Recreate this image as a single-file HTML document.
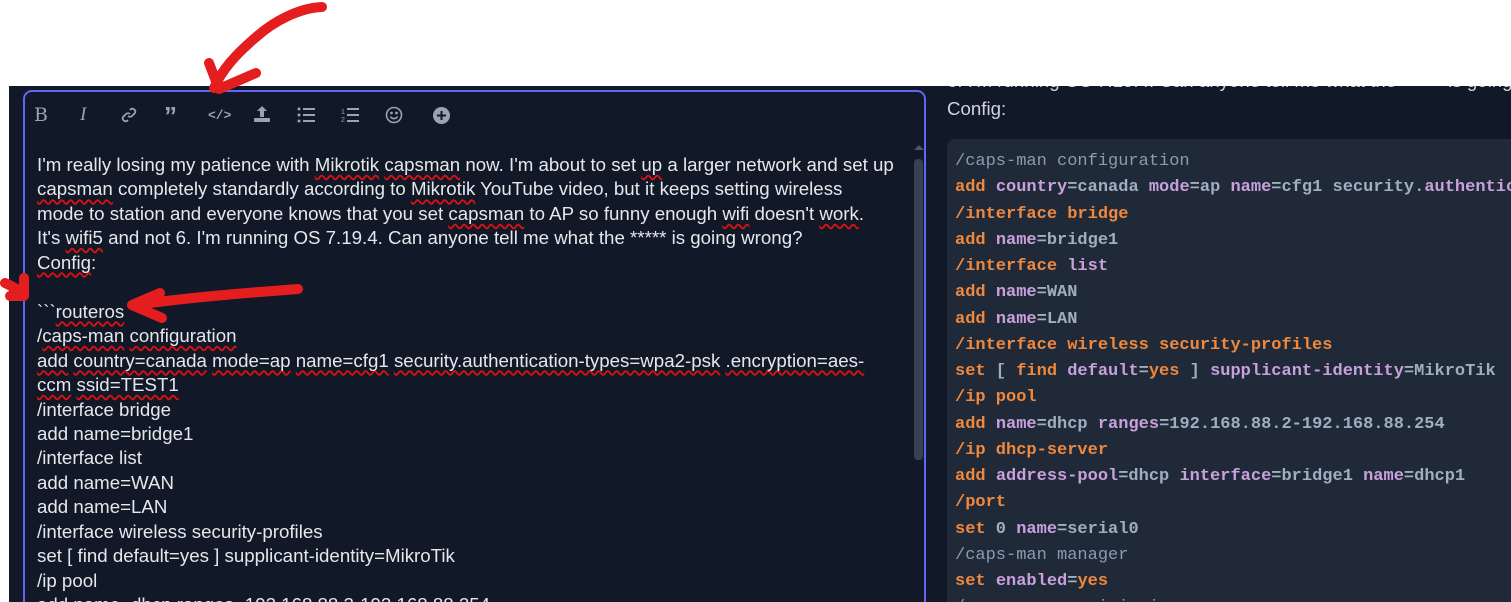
<!DOCTYPE html>
<html><head><style>
html,body{margin:0;width:1511px;height:602px;overflow:hidden}
body{background:#fff;position:relative;font-family:"Liberation Sans",sans-serif}
#w{position:absolute;left:0;top:0;width:1511px;height:602px;overflow:hidden}
.dark{position:absolute;left:9px;top:86px;width:1502px;height:516px;background:#111827}
.ed{position:absolute;left:23px;top:90px;width:899px;height:530px;border:2px solid #6366f1;border-radius:9px;background:#111827}
.tb{position:absolute;top:104px;color:#9ca3af;font-size:19px}
.txt{position:absolute;left:37px;top:153px;color:#e5e7eb;font-size:18.7px;line-height:24.45px;white-space:pre}
.sq{text-decoration:underline wavy #d11;text-decoration-skip-ink:none;text-underline-offset:3px}
.thumb{position:absolute;left:914px;top:159px;width:9px;height:301px;background:#374151;border-radius:4px}
.rt{position:absolute;left:947px;color:#d1d5db;font-size:18.7px}
.code{position:absolute;left:947px;top:139px;width:564px;height:470px;background:#1f2937;border-radius:8px 0 0 8px}
.cl{position:absolute;left:955px;top:149px;font-family:"Liberation Mono",monospace;font-size:17px;line-height:26.25px;white-space:pre;color:#a0aec0;font-weight:bold}
.o{color:#f0883e}.p{color:#c9a0dc}.g{color:#8b9bb0;font-weight:normal}
</style></head><body><div id="w">
<div class="dark"></div>
<div class="ed"></div>
<div class="tb" style="left:34px;font-family:'DejaVu Serif',serif;">B</div>
<div class="tb" style="left:80px;font-family:'Liberation Serif',serif;font-style:italic">I</div>
<svg style="position:absolute;left:120px;top:106px" width="18" height="18" viewBox="0 0 18 18" fill="none" stroke="#9ca3af" stroke-width="1.8"><path d="M8 10a3 3 0 0 0 4 0l3-3a3 3 0 0 0-4-4l-1 1M10 8a3 3 0 0 0-4 0l-3 3a3 3 0 0 0 4 4l1-1"/></svg>
<div class="tb" style="left:164px;font-weight:bold;font-size:26px;top:106px;line-height:20px">”</div>
<div class="tb" style="left:208px;font-size:13px;top:108px;font-family:'Liberation Mono',monospace;font-weight:bold">&lt;/&gt;</div>
<svg style="position:absolute;left:252px;top:104px" width="20" height="20" viewBox="0 0 20 20" fill="#9ca3af"><path d="M10 2l5 5h-3v6H8V7H5z"/><rect x="2" y="14" width="16" height="4" rx="1"/></svg>
<svg style="position:absolute;left:297px;top:107px" width="20" height="16" viewBox="0 0 20 16" fill="#9ca3af"><circle cx="2" cy="2" r="1.5"/><circle cx="2" cy="8" r="1.5"/><circle cx="2" cy="14" r="1.5"/><rect x="6" y="1" width="12" height="2"/><rect x="6" y="7" width="12" height="2"/><rect x="6" y="13" width="12" height="2"/></svg>
<svg style="position:absolute;left:341px;top:107px" width="20" height="16" viewBox="0 0 20 16" fill="#9ca3af"><text x="0" y="7" font-size="7" font-family="Liberation Sans">1</text><text x="0" y="15" font-size="7" font-family="Liberation Sans">2</text><rect x="6" y="1" width="12" height="2"/><rect x="6" y="7" width="12" height="2"/><rect x="6" y="13" width="12" height="2"/></svg>
<svg style="position:absolute;left:385px;top:106px" width="18" height="18" viewBox="0 0 18 18" fill="none" stroke="#9ca3af" stroke-width="1.6"><circle cx="9" cy="9" r="7.5"/><path d="M5.5 10.5a4 4 0 0 0 7 0"/><circle cx="6.5" cy="7" r=".6" fill="#9ca3af"/><circle cx="11.5" cy="7" r=".6" fill="#9ca3af"/></svg>
<svg style="position:absolute;left:432px;top:106px" width="19" height="19" viewBox="0 0 19 19"><circle cx="9.5" cy="9.5" r="8.5" fill="#9ca3af"/><path d="M9.5 5v9M5 9.5h9" stroke="#111827" stroke-width="2"/></svg>
<div class="txt">I'm really losing my patience with <span class="sq">Mikrotik</span> <span class="sq">capsman</span> now. I'm about to set <span class="sq">up</span> a larger network and set up
<span class="sq">capsman</span> completely standardly according to <span class="sq">Mikrotik</span> YouTube video, but it keeps setting wireless
mode to station and everyone knows that you set <span class="sq">capsman</span> to AP so funny enough <span class="sq">wifi</span> doesn't <span class="sq">work</span>.
It's <span class="sq">wifi5</span> and not 6. I'm running OS 7.19.4. Can anyone tell me what the ***** is going wrong?
<span class="sq">Config</span>:

&#96;&#96;&#96;<span class="sq">routeros</span>
/<span class="sq">caps-man</span> <span class="sq">configuration</span>
<span class="sq">add</span> <span class="sq">country=canada</span> <span class="sq">mode=ap</span> <span class="sq">name=cfg1</span> <span class="sq">security.authentication-types=wpa2-psk</span> <span class="sq">.encryption=aes-</span>
<span class="sq">ccm</span> <span class="sq">ssid=TEST1</span>
/interface bridge
add name=bridge1
/interface list
add name=WAN
add name=LAN
/interface wireless security-profiles
set [ find default=yes ] supplicant-identity=MikroTik
/ip pool
add name=dhcp ranges=192.168.88.2-192.168.88.254</div>
<div class="thumb"></div>
<div style="position:absolute;left:914px;top:145px;width:0;height:0;border-left:5px solid transparent;border-right:5px solid transparent;border-bottom:5px solid #4b5563"></div>
<div class="rt" style="top:70px;white-space:pre">6. I'm running OS 7.19.4. Can anyone tell me what the *****  is going wrong?</div>
<div style="position:absolute;left:940px;top:60px;width:571px;height:26px;background:#fff"></div>
<div class="rt" style="top:98px">Config:</div>
<div class="code"></div>
<div class="cl"><span class="g">/caps-man configuration</span>
<span class="o">add</span> <span class="p">country</span>=canada <span class="p">mode</span>=ap <span class="p">name</span>=cfg1 security.<span class="p">authentication-types</span>
<span class="o">/interface bridge</span>
<span class="o">add</span> <span class="p">name</span>=bridge1
<span class="o">/interface</span> <span class="p">list</span>
<span class="o">add</span> <span class="p">name</span>=WAN
<span class="o">add</span> <span class="p">name</span>=LAN
<span class="o">/interface wireless security-profiles</span>
<span class="o">set</span> [ <span class="o">find</span> <span class="p">default</span>=<span class="o">yes</span> ] <span class="p">supplicant-identity</span>=MikroTik
<span class="o">/ip pool</span>
<span class="o">add</span> <span class="p">name</span>=dhcp <span class="p">ranges</span>=192.168.88.2-192.168.88.254
<span class="o">/ip dhcp-server</span>
<span class="o">add</span> <span class="p">address-pool</span>=dhcp <span class="p">interface</span>=bridge1 <span class="p">name</span>=dhcp1
<span class="o">/port</span>
<span class="o">set</span> 0 <span class="p">name</span>=serial0
<span class="g">/caps-man manager</span>
<span class="o">set</span> <span class="p">enabled</span>=<span class="o">yes</span>
<span class="g">/caps-man provisioning</span></div>
<svg style="position:absolute;left:0;top:0" width="1511" height="602" fill="none" stroke="#e41e1e" stroke-width="10" stroke-linecap="round" stroke-linejoin="round">
<path d="M322 7C300 8 275 20 255 38C235 55 222 70 214 88"/>
<path d="M209 63L219 89L256 73"/>
<path d="M298 289C260 292 200 296 135 305"/>
<path d="M160 293L132 305L162 318"/>
<path d="M5 283C12 286 18 290 22 292"/>
<path d="M24 278L24 296L10 296"/>
</svg>
</div></body></html>
